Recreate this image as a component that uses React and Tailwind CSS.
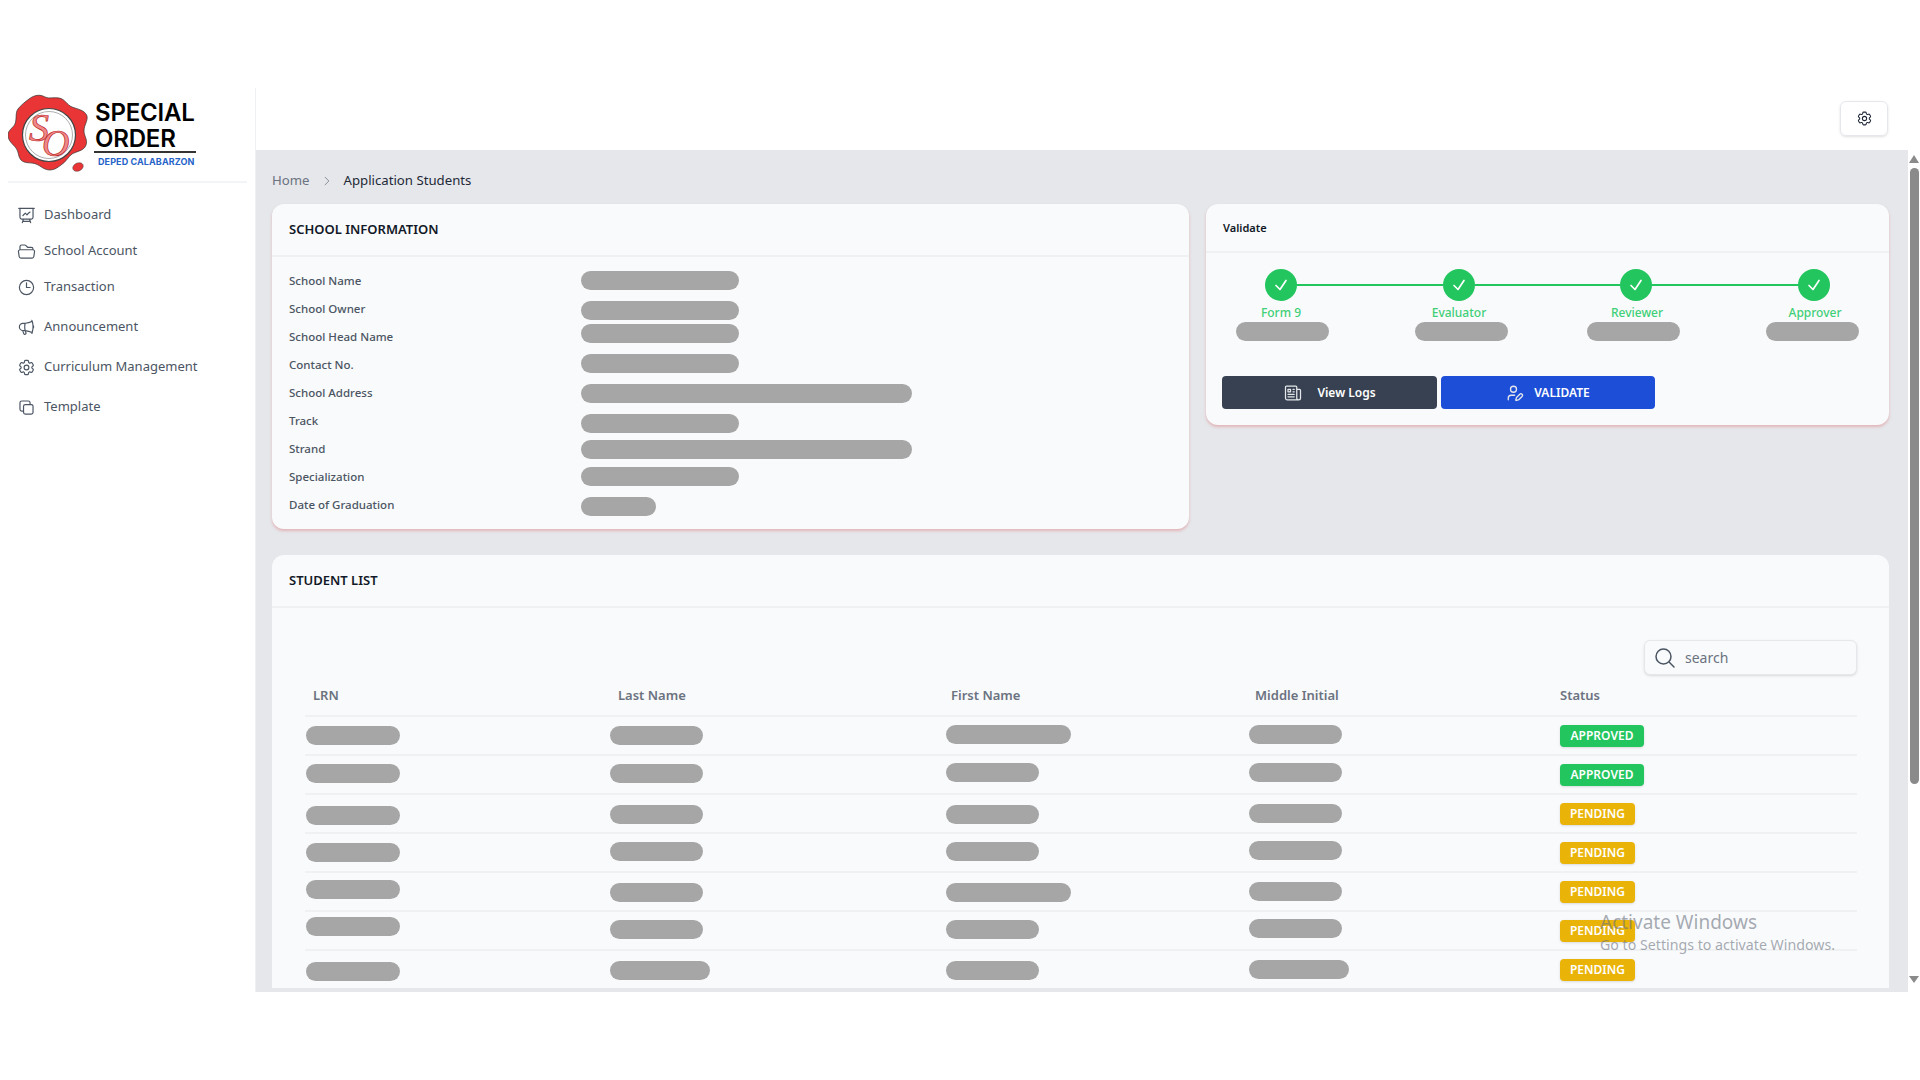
import {
  HiOutlinePresentationChartLine,
  HiOutlineFolderOpen,
  HiOutlineClock,
  HiOutlineMegaphone,
  HiOutlineCog6Tooth,
  HiOutlineSquare2Stack,
  HiOutlineMagnifyingGlass,
  HiOutlineNewspaper,
  HiOutlineChevronRight,
  HiOutlineCheck,
} from 'react-icons/hi2';
import { UserPen } from 'lucide-react';

const navItems = [
  { label: 'Dashboard', icon: HiOutlinePresentationChartLine, row: 'h-9' },
  { label: 'School Account', icon: HiOutlineFolderOpen, row: 'h-9' },
  { label: 'Transaction', icon: HiOutlineClock, row: 'h-9' },
  { label: 'Announcement', icon: HiOutlineMegaphone, row: 'h-9 mt-1' },
  { label: 'Curriculum Management', icon: HiOutlineCog6Tooth, row: 'h-9 mt-1' },
  { label: 'Template', icon: HiOutlineSquare2Stack, row: 'h-9 mt-1' },
];

const schoolRows = [
  { label: 'School Name', pill: 'mt-[4px] w-[158px]' },
  { label: 'School Owner', pill: 'mt-[6px] w-[158px]' },
  { label: 'School Head Name', pill: 'mt-[1px] w-[158px]' },
  { label: 'Contact No.', pill: 'mt-[3px] w-[158px]' },
  { label: 'School Address', pill: 'mt-[5px] w-[331px]' },
  { label: 'Track', pill: 'mt-[7px] w-[158px]' },
  { label: 'Strand', pill: 'mt-[5px] w-[331px]' },
  { label: 'Specialization', pill: 'mt-[4px] w-[158px]' },
  { label: 'Date of Graduation', pill: 'mt-[6px] w-[75px]' },
];

const steps = [
  { label: 'Form 9', pill: 'ml-[3px]' },
  { label: 'Evaluator', pill: 'ml-[5px]' },
  { label: 'Reviewer', pill: 'mr-[7px]' },
  { label: 'Approver', pill: 'mr-[5px]' },
];

const students = [
  { lrn: 'mt-[9px]', last: 'mt-[9px] w-[93px]', first: 'mt-[8px] w-[125px]', middle: 'mt-[8px] w-[93px]', status: 'APPROVED' },
  { lrn: 'mt-[8px]', last: 'mt-[8px] w-[93px]', first: 'mt-[7px] w-[93px]', middle: 'mt-[7px] w-[93px]', status: 'APPROVED' },
  { lrn: 'mt-[11px]', last: 'mt-[10px] w-[93px]', first: 'mt-[10px] w-[93px]', middle: 'mt-[9px] w-[93px]', status: 'PENDING' },
  { lrn: 'mt-[9px]', last: 'mt-[8px] w-[93px]', first: 'mt-[8px] w-[93px]', middle: 'mt-[7px] w-[93px]', status: 'PENDING' },
  { lrn: 'mt-[7px]', last: 'mt-[10px] w-[93px]', first: 'mt-[10px] w-[125px]', middle: 'mt-[9px] w-[93px]', status: 'PENDING' },
  { lrn: 'mt-[5px]', last: 'mt-[8px] w-[93px]', first: 'mt-[8px] w-[93px]', middle: 'mt-[7px] w-[93px]', status: 'PENDING' },
  { lrn: 'mt-[11px]', last: 'mt-[10px] w-[100px]', first: 'mt-[10px] w-[93px]', middle: 'mt-[9px] w-[100px]', status: 'PENDING' },
];

function Pill({ className }) {
  return <div className={`h-[19px] rounded-full bg-[#a6a6a6] ${className}`} />;
}

function Logo() {
  return (
    <div className="flex items-start pl-[8px] pt-[6px]">
      <svg viewBox="0 0 80 80" className="h-[80px] w-[80px] shrink-0">
        <path
          d="M21 5c5-4 11-5 16-2 4 2 9 0 14 1 6 1 8 7 13 9 5 2 13 3 15 9 1 5-3 9-3 15 0 5 4 9 2 14-2 6-9 6-14 9-4 3-6 8-11 11-3 2-6 5-11 5-6 0-9-4-14-6-5-2-11 0-15-4-3-3-2-8-5-12-3-4-8-7-8-13 0-5 5-7 7-11 2-5 0-11 3-15 3-4 7-7 11-10z"
          fill="#e93535"
          stroke="#333"
          strokeWidth="0.7"
        />
        <ellipse cx="70" cy="73" rx="5.5" ry="4" fill="#e93535" stroke="#333" strokeWidth="0.4" transform="rotate(-25 70 73)" />
        <circle cx="41" cy="41" r="26.5" fill="#fff" stroke="#444" strokeWidth="1.2" />
        <circle cx="41" cy="41" r="23.5" fill="none" stroke="#777" strokeWidth="0.6" />
        <text x="21" y="47" fontFamily="'Liberation Serif', serif" fontStyle="italic" fontSize="40" fill="#f08a8a" stroke="#b91c1c" strokeWidth="0.7">S</text>
        <text x="34" y="62" fontFamily="'Liberation Serif', serif" fontStyle="italic" fontSize="38" fill="#f08a8a" stroke="#b91c1c" strokeWidth="0.7">O</text>
      </svg>
      <div className="ml-[6px] flex w-[102px] flex-col pt-[6px] font-['Inter',sans-serif]">
        <span className="pl-[1px] text-[24px] font-semibold leading-[26px] tracking-[-0.2px] text-black">SPECIAL</span>
        <span className="pl-[1px] text-[24px] font-semibold leading-[25px] tracking-[-0.2px] text-black">ORDER</span>
        <div className="h-[2px] bg-[#333]" />
        <span className="mt-[3px] pl-[4px] text-[9px] font-bold leading-[12px] tracking-[0.1px] text-[#2563c9]">DEPED CALABARZON</span>
      </div>
    </div>
  );
}

function Sidebar() {
  return (
    <aside className="flex w-[256px] shrink-0 flex-col border-r border-[#f0f1f3] bg-white">
      <Logo />
      <div className="mx-[8px] mt-[7px] h-[2px] w-[239px] bg-[#f3f4f6]" />
      <nav className="mt-[14px] flex flex-col">
        {navItems.map((item) => (
          <a key={item.label} className={`flex items-center pl-[17px] text-[#4b5563] ${item.row}`}>
            <item.icon className="h-[19px] w-[19px] shrink-0" />
            <span className="ml-[8px] text-[13px]">{item.label}</span>
          </a>
        ))}
      </nav>
    </aside>
  );
}

function Stepper() {
  return (
    <div className="pt-[16px]">
      <div className="ml-[59px] mr-[59px] flex items-center">
        {steps.map((step, i) => (
          <div key={step.label} className={`flex items-center ${i < 3 ? 'flex-1' : ''}`}>
            <div className="flex h-[32px] w-[32px] shrink-0 items-center justify-center rounded-full bg-[#22c55e] text-white">
              <HiOutlineCheck className="h-[16px] w-[16px] stroke-[2.5]" />
            </div>
            {i < 3 && <div className="h-[2px] flex-1 bg-[#22c55e]" />}
          </div>
        ))}
      </div>
      <div className="ml-[5px] mt-[3px] flex gap-[38px]">
        {steps.map((step) => (
          <div key={step.label} className="flex w-[140px] flex-col items-center">
            <span className="text-[12px] font-medium leading-[18px] text-[#3fcf78]">{step.label}</span>
            <Pill className={`w-[93px] ${step.pill}`} />
          </div>
        ))}
      </div>
    </div>
  );
}

function ValidateCard() {
  return (
    <section className="h-[221px] w-[683px] rounded-xl bg-[#f9fafb] shadow-[0_2px_3px_rgba(220,90,90,0.35)]">
      <div className="flex h-[49px] items-center border-b-2 border-[#f0f1f3] pl-[17px] pt-[1px] text-[11px] font-semibold text-[#111827]">Validate</div>
      <Stepper />
      <div className="ml-[16px] mt-[35px] flex gap-[4px]">
        <button className="flex h-[33px] w-[215px] items-center justify-center gap-[14px] rounded bg-[#374151] text-[12px] font-semibold text-white">
          <HiOutlineNewspaper className="h-[20px] w-[20px] text-[#e5e7eb]" />
          View Logs
        </button>
        <button className="flex h-[33px] w-[214px] items-center justify-center gap-[10px] rounded bg-[#1d4ed8] text-[12px] font-semibold text-white">
          <UserPen className="h-[18px] w-[18px] text-[#e5e7eb]" strokeWidth={1.75} />
          VALIDATE
        </button>
      </div>
    </section>
  );
}

function SchoolCard() {
  return (
    <section className="h-[325px] w-[917px] rounded-xl bg-[#f9fafb] shadow-[0_2px_3px_rgba(220,90,90,0.35)]">
      <div className="flex h-[53px] items-center border-b-2 border-[#f0f1f3] pl-[17px] text-[13px] font-semibold text-[#111827]">SCHOOL INFORMATION</div>
      <div className="pl-[17px] pt-[10px]">
        {schoolRows.map((row) => (
          <div key={row.label} className="flex h-[28px] items-start">
            <span className="w-[292px] shrink-0 text-[11.5px] font-medium leading-[28px] text-[#4b5563]">{row.label}</span>
            <Pill className={row.pill} />
          </div>
        ))}
      </div>
    </section>
  );
}

function StudentRow({ student }) {
  const approved = student.status === 'APPROVED';
  return (
    <div className="grid h-[39px] grid-cols-[305px_336px_303px_311px_1fr] items-start overflow-hidden border-b-2 border-[#f0f1f3]">
      <Pill className={`ml-px w-[94px] ${student.lrn}`} />
      <Pill className={student.last} />
      <Pill className={student.first} />
      <Pill className={student.middle} />
      <div className="mt-[8px]">
        <span className={`flex h-[22px] items-center justify-center rounded text-[12px] font-semibold text-white shadow-sm ${approved ? 'w-[84px] bg-[#22c55e]' : 'w-[75px] bg-[#eab308]'}`}>
          {student.status}
        </span>
      </div>
    </div>
  );
}

function StudentCard() {
  return (
    <section className="mt-[26px] h-[433px] w-[1617px] overflow-hidden rounded-t-xl bg-[#f9fafb]">
      <div className="flex h-[53px] items-center border-b-2 border-[#f0f1f3] pl-[17px] text-[13px] font-semibold text-[#111827]">STUDENT LIST</div>
      <div className="pl-[33px] pr-[32px]">
        <div className="mt-[32px] flex justify-end">
          <div className="flex h-[35px] w-[213px] items-center rounded-md border border-[#e5e7eb] bg-[#f9fafb] pl-[8px] shadow-sm">
            <HiOutlineMagnifyingGlass className="h-[24px] w-[24px] text-[#4b5563]" />
            <span className="ml-[8px] text-[14px] text-[#6b7280]">search</span>
          </div>
        </div>
        <div className="grid h-[42px] grid-cols-[305px_336px_303px_311px_1fr] items-center border-b-2 border-[#f0f1f3] pt-[2px] text-[13px] font-semibold text-[#6b7280]">
          <span className="pl-[8px]">LRN</span>
          <span className="pl-[8px]">Last Name</span>
          <span className="pl-[5px]">First Name</span>
          <span className="pl-[6px]">Middle Initial</span>
          <span>Status</span>
        </div>
        {students.map((student, i) => (
          <StudentRow key={i} student={student} />
        ))}
      </div>
    </section>
  );
}

function Scrollbar() {
  return (
    <div className="flex w-[12px] shrink-0 flex-col items-center bg-white pt-[5px] pb-[9px]">
      <div className="h-0 w-0 border-x-[5px] border-b-[8px] border-x-transparent border-b-[#8a8a8a]" />
      <div className="mt-[5px] h-[616px] w-[9px] rounded-full bg-[#8a8a8a]" />
      <div className="flex-1" />
      <div className="h-0 w-0 border-x-[5px] border-t-[7px] border-x-transparent border-t-[#8a8a8a]" />
    </div>
  );
}

export default function App() {
  return (
    <div className="relative flex h-[1080px] w-[1920px] flex-col overflow-hidden bg-white pt-[88px] pb-[88px] font-['Noto_Sans',sans-serif]">
      <div className="flex min-h-0 flex-1">
        <Sidebar />
        <div className="flex min-w-0 flex-1 flex-col">
          <header className="flex h-[62px] shrink-0 items-start justify-end bg-white pr-[32px] pt-[13px]">
            <button className="flex h-[35px] w-[48px] items-center justify-center rounded-md border border-[#e5e7eb] shadow-sm">
              <HiOutlineCog6Tooth className="h-[17px] w-[17px] text-[#1f2937]" />
            </button>
          </header>
          <div className="flex min-h-0 flex-1">
            <main className="min-w-0 flex-1 overflow-hidden bg-[#e5e7eb] pl-[16px] pb-[4px]">
              <div className="flex h-[54px] items-center pt-[8px] text-[13.2px]">
                <span className="text-[#6b7280]">Home</span>
                <HiOutlineChevronRight className="mx-[11px] h-[12px] w-[12px] text-[#6b7280]" />
                <span className="text-[#1f2937]">Application Students</span>
              </div>
              <div className="flex items-start gap-[17px]">
                <SchoolCard />
                <ValidateCard />
              </div>
              <StudentCard />
            </main>
            <Scrollbar />
          </div>
        </div>
      </div>
      <div className="absolute left-[1600px] top-[909px] text-[#6b7280]/60">
        <div className="text-[19px] leading-[26px]">Activate Windows</div>
        <div className="text-[14.2px] leading-[20px]">Go to Settings to activate Windows.</div>
      </div>
    </div>
  );
}
